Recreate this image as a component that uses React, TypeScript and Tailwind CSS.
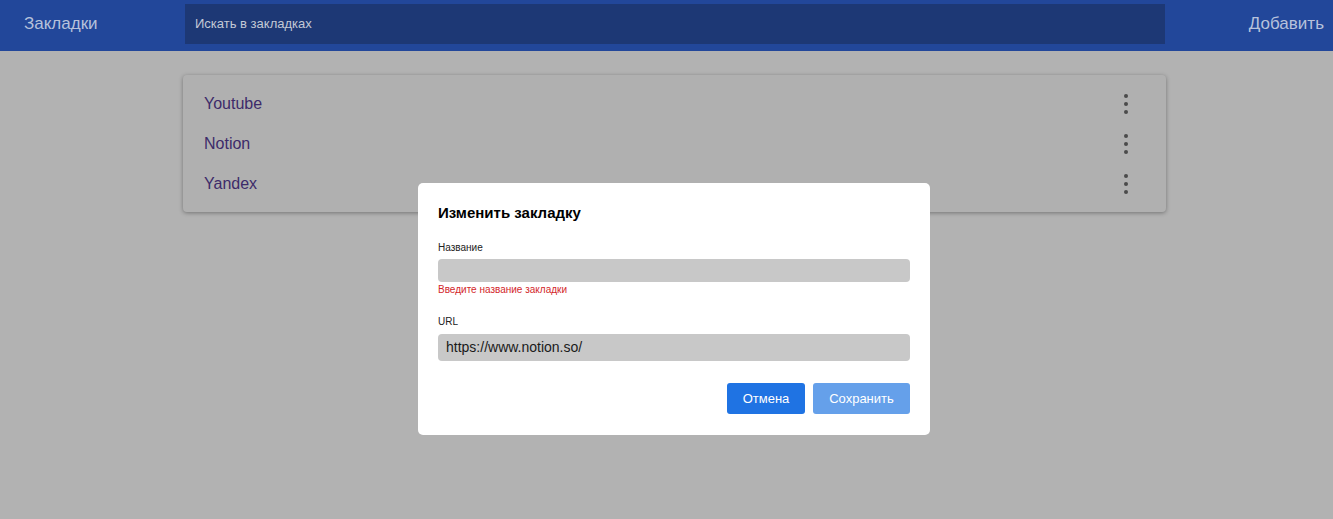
const bookmarks = ['Youtube', 'Notion', 'Yandex'];

function Kebab() {
  return (
    <div className="flex flex-col items-center gap-[4px]">
      <span className="h-[4px] w-[4px] rounded-full bg-[#4b4b4b]" />
      <span className="h-[4px] w-[4px] rounded-full bg-[#4b4b4b]" />
      <span className="h-[4px] w-[4px] rounded-full bg-[#4b4b4b]" />
    </div>
  );
}

function EditDialog() {
  return (
    <div className="absolute left-[418px] top-[183px] w-[512px] rounded-[5px] bg-white px-5 pt-[21px] pb-[21px]">
      <h2 className="text-[15px] font-bold leading-[18px] text-black">Изменить закладку</h2>
      <label className="mt-[20px] block text-[10px] leading-[12px] text-[#222]">Название</label>
      <div className="mt-[5px] h-[23px] rounded-[4px] bg-[#c8c8c8]" />
      <p className="mt-[2px] text-[10px] leading-[12px] text-[#d3272b]">Введите название закладки</p>
      <label className="mt-[20px] block text-[10px] leading-[12px] text-[#222]">URL</label>
      <div className="mt-[6px] flex h-[27px] items-center rounded-[4px] bg-[#c8c8c8] px-2 text-[14px] text-[#1a1a1a]">
        https://www.notion.so/
      </div>
      <div className="mt-[22px] flex justify-end gap-2">
        <button className="h-[31px] w-[78px] rounded-[3px] bg-[#1f73e3] text-[13px] text-white">Отмена</button>
        <button className="h-[31px] w-[97px] rounded-[3px] bg-[#65a0ea] text-[13px] text-white">Сохранить</button>
      </div>
    </div>
  );
}

export default function App() {
  return (
    <div className="relative h-[519px] w-full overflow-hidden bg-[#b2b2b2] font-['Liberation_Sans',Arial,sans-serif]">
      <header className="flex h-[51px] items-start bg-[#22479a] pr-[9px] pt-1">
        <div className="flex h-[40px] w-[185px] items-center pl-6 text-[17px] text-[#b7c2dc]">Закладки</div>
        <div className="flex h-[40px] w-[980px] items-center bg-[#1d3875] px-[10px] text-[13px] text-[#c3c9d6]">
          Искать в закладках
        </div>
        <div className="flex h-[40px] flex-1 items-center justify-end text-[17px] text-[#b7c2dc]">Добавить</div>
      </header>

      <div className="ml-[183px] mt-[24px] w-[983px] rounded-[4px] bg-[#b0b0b0] pt-[9px] pb-[8px] shadow-[0_1px_4px_rgba(0,0,0,0.35)]">
        {bookmarks.map((b) => (
          <div key={b} className="flex h-[40px] items-center justify-between pl-[21px] pr-[38px]">
            <span className="text-[16px] text-[#3d2b6a]">{b}</span>
            <Kebab />
          </div>
        ))}
      </div>

      <EditDialog />
    </div>
  );
}
